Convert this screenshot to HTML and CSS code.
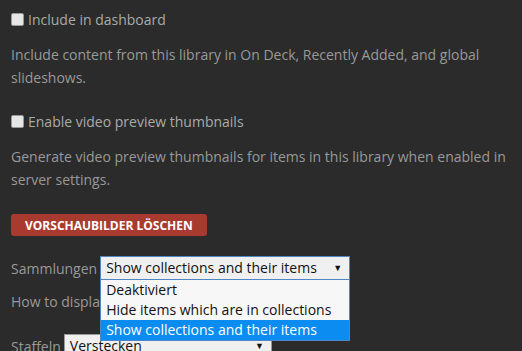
FILE: index.html
```html
<!DOCTYPE html>
<html lang="en">
<head>
    <meta charset="UTF-8">
    <title>Library settings</title>
    <link rel="stylesheet" href="styles.css">
</head>
<body>
    <div class="settings">
        <div class="field">
            <label class="check-label"><span class="checkbox"></span>Include in dashboard</label>
            <p class="help">Include content from this library in On Deck, Recently Added, and global slideshows.</p>
        </div>

        <div class="field">
            <label class="check-label"><span class="checkbox"></span>Enable video preview thumbnails</label>
            <p class="help">Generate video preview thumbnails for items in this library when enabled in server settings.</p>
        </div>

        <div class="field field-button">
            <button class="danger-button">Vorschaubilder löschen</button>
        </div>

        <div class="field field-select">
            <div class="select-row">
                <span class="select-label">Sammlungen</span>
                <div class="select-wrap">
                    <div class="select">Show collections and their items<span class="arrow">&#9660;</span></div>
                    <ul class="select-menu">
                        <li>Deaktiviert</li>
                        <li>Hide items which are in collections</li>
                        <li class="active">Show collections and their items</li>
                    </ul>
                </div>
            </div>
            <p class="help help-select">How to display collections in this library.</p>
        </div>

        <div class="field">
            <div class="select-row">
                <span class="select-label">Staffeln</span>
                <div class="select-wrap">
                    <div class="select select-small">Verstecken<span class="arrow">&#9660;</span></div>
                </div>
            </div>
        </div>
    </div>
</body>
</html>
```

FILE: styles.css
```css
html, body {
    margin: 0;
    height: 100%;
    overflow: hidden;
}

body {
    background-color: #2b2b2b;
    font-family: "Open Sans", sans-serif;
    font-size: 14px;
    color: #999;
}

.settings {
    padding: 9px 11px;
}

.field {
    margin-bottom: 22px;
}

.field-button {
    margin-bottom: 20px;
    padding-top: 1px;
}

.field-select {
    margin-bottom: 21px;
}

.check-label {
    display: flex;
    align-items: center;
    gap: 4px;
    color: #aaa;
    line-height: 22px;
}

.checkbox {
    display: inline-block;
    width: 11px;
    height: 11px;
    background-color: #e6e6e6;
    border: 1px solid #999;
    border-radius: 2px;
    margin-bottom: 2px;
}

.help {
    margin: 12px 0 0;
    line-height: 23px;
}

.help-select {
    margin-top: 10px;
}

.danger-button {
    display: block;
    background-color: #a93a2f;
    color: #fff;
    border: none;
    border-radius: 3px;
    font-family: "Open Sans", sans-serif;
    font-weight: 700;
    font-size: 12px;
    text-transform: uppercase;
    white-space: nowrap;
    padding: 0 14px;
    height: 22px;
}

.select-row {
    display: flex;
    align-items: center;
    gap: 3px;
    color: #999;
}

.select-wrap {
    position: relative;
}

.select {
    position: relative;
    box-sizing: border-box;
    width: 250px;
    height: 24px;
    line-height: 22px;
    padding: 0 24px 0 5px;
    background-color: #f0f0f0;
    color: #111;
    border: 1px solid #4f86c6;
    font-size: 14px;
}

.select-small {
    width: 208px;
    border-color: #999;
}

.arrow {
    position: absolute;
    right: 7px;
    top: 0;
    font-size: 9px;
    color: #111;
}

.select-menu {
    position: absolute;
    top: 23px;
    left: 0;
    z-index: 10;
    box-sizing: border-box;
    width: 250px;
    margin: 0;
    padding: 0;
    list-style: none;
    background-color: #f7f7f7;
    border: 1px solid #4f86c6;
    color: #111;
}

.select-menu li {
    height: 20px;
    line-height: 20px;
    padding: 0 5px;
}

.select-menu li.active {
    background-color: #0a8cf0;
    color: #fff;
}
```
